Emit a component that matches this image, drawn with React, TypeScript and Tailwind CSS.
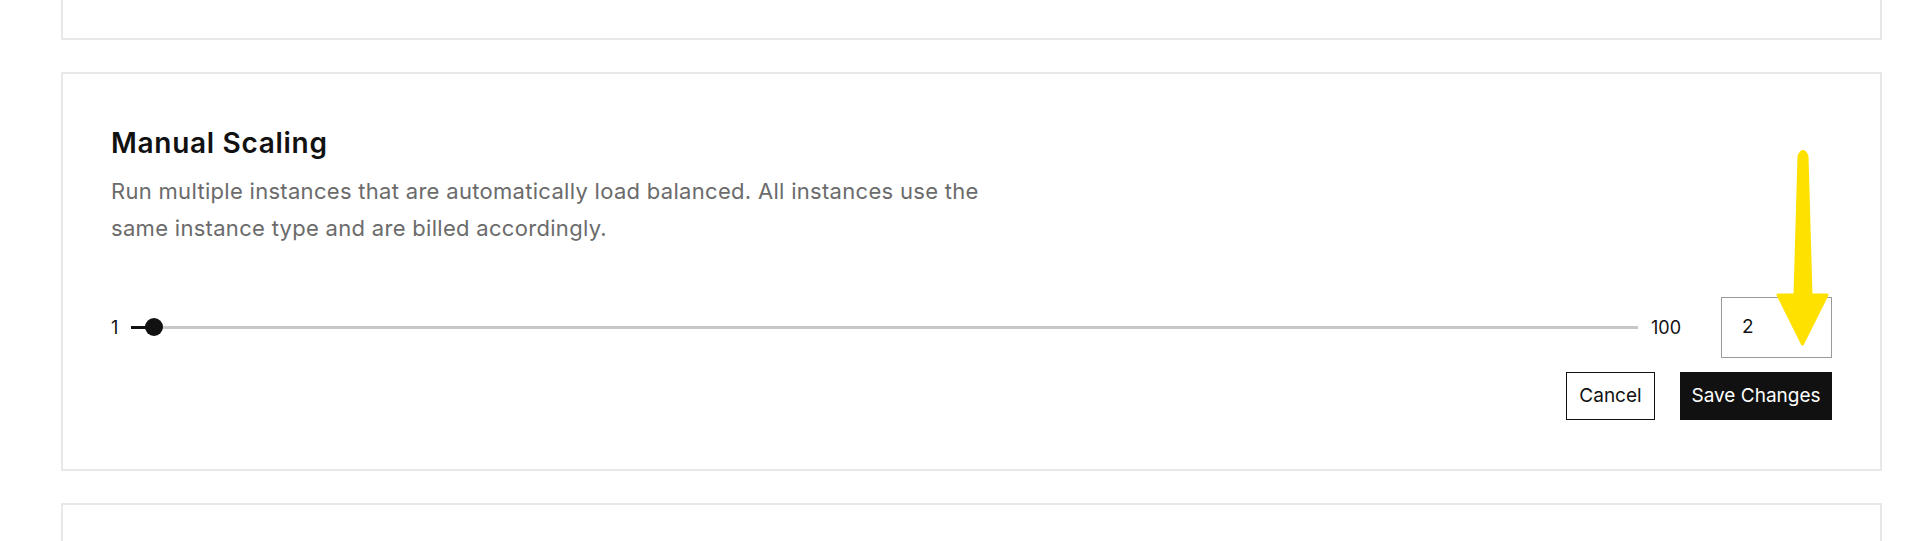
import React from 'react';

export default function App() {
  return (
    <div className="relative min-h-screen bg-white pl-[61px] pr-[38px] font-['Inter',sans-serif] text-[#111]">
      <div className="h-[40px] border-2 border-t-0 border-[#e8e8e8]" />

      <div className="mt-[32px] border-2 border-[#e8e8e8] px-[48px] pt-[52px] pb-[49px]">
        <h2 className="text-[28px] font-semibold leading-[35px] tracking-[0.7px]">Manual Scaling</h2>
        <p className="mt-[12px] max-w-[900px] text-[22px] leading-[37px] tracking-[0.3px] text-[#6b6b6b]">
          Run multiple instances that are automatically load balanced. All instances use the same instance type and are
          billed accordingly.
        </p>

        <div className="mt-[50px] flex items-center">
          <span className="w-[20px] text-[18px]">1</span>
          <div className="relative h-[3px] flex-1 bg-[#c8c8c8]">
            <div className="absolute left-0 top-0 h-[3px] w-[23px] bg-[#111]" />
            <div className="absolute left-[14px] top-[-8px] h-[18px] w-[18px] rounded-full bg-[#111]" />
          </div>
          <span className="ml-[13px] w-[70px] text-[18px]">100</span>
          <div className="flex h-[61px] w-[111px] items-center border border-[#9a9a9a] pl-[20px] text-[19px]">2</div>
        </div>

        <div className="mt-[14px] flex justify-end gap-[25px]">
          <button className="h-[48px] w-[89px] border-[1.5px] border-[#111] bg-white text-[19px]">Cancel</button>
          <button className="h-[48px] w-[152px] bg-[#111] text-[19px] text-white">Save Changes</button>
        </div>
      </div>

      <div className="mt-[32px] h-[40px] border-2 border-b-0 border-[#e8e8e8]" />

      <svg className="absolute left-[1770px] top-[145px]" width="70" height="210" viewBox="0 0 70 210">
        <path
          d="M29 11 Q33 2 37 11 L41 150 L57 150 L32.5 199 L8 150 L25 150 Z"
          fill="#ffe100"
          stroke="#ffe100"
          strokeWidth="3"
          strokeLinejoin="round"
        />
      </svg>
    </div>
  );
}
